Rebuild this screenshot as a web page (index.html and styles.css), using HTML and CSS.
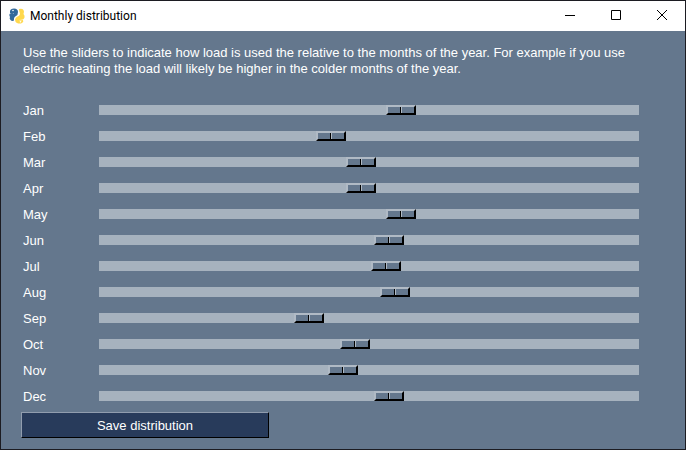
FILE: index.html
```html
<!DOCTYPE html>
<html lang="en">
<head>
<meta charset="utf-8">
<title>Monthly distribution</title>
<link rel="stylesheet" href="styles.css">
</head>
<body>
<div class="window">
  <header class="titlebar">
    <svg class="logo" viewBox="0 0 16 16" aria-hidden="true">
      <path fill="#32699b" d="M1 3Q1.500 .5 5 .5Q9 .5 9 4Q9 7 7 8Q4.500 9 5 12.500Q3 13.500 1.500 12Q0 10.500 1 9Q0 7.500 .5 6Q1.500 5 5 5.500V5Q2.500 5.500 1 5Z"/>
      <path fill="#ffd84d" d="M10 1Q13 0 14.500 2Q15.500 3.500 14.500 6Q16 7.500 15.500 9.500Q15 12 10.500 12V12.500L14 12Q15 14 13 15Q10.500 16 8 15Q6 14 6 11.500Q6.500 9.500 8.500 8.500Q12 7 10.500 4Q10 3 10 1Z"/>
      <circle cx="4" cy="2.500" r=".8" fill="#fff"/>
      <circle cx="11.500" cy="13.800" r=".8" fill="#fff"/>
    </svg>
    <h1 class="title">Monthly distribution</h1>
    <button class="control" type="button" aria-label="Minimize"><svg viewBox="0 0 10 10"><path d="M0 5.500H10"/></svg></button>
    <button class="control" type="button" aria-label="Maximize"><svg viewBox="0 0 10 10"><path d="M.5 .5H9.500V9.500H.5Z"/></svg></button>
    <button class="control" type="button" aria-label="Close"><svg viewBox="0 0 10 10"><path d="M0 0L10 10M10 0L0 10"/></svg></button>
  </header>
  <main class="content">
    <p class="intro">Use the sliders to indicate how load is used the relative to the months of the year. For example if you use electric heating the load will likely be higher in the colder months of the year.</p>
    <form>
      <div class="row"><label for="jan">Jan</label><input id="jan" type="range" min="0" max="510" value="287"></div>
      <div class="row"><label for="feb">Feb</label><input id="feb" type="range" min="0" max="510" value="217"></div>
      <div class="row"><label for="mar">Mar</label><input id="mar" type="range" min="0" max="510" value="247"></div>
      <div class="row"><label for="apr">Apr</label><input id="apr" type="range" min="0" max="510" value="247"></div>
      <div class="row"><label for="may">May</label><input id="may" type="range" min="0" max="510" value="287"></div>
      <div class="row"><label for="jun">Jun</label><input id="jun" type="range" min="0" max="510" value="275"></div>
      <div class="row"><label for="jul">Jul</label><input id="jul" type="range" min="0" max="510" value="272"></div>
      <div class="row"><label for="aug">Aug</label><input id="aug" type="range" min="0" max="510" value="281"></div>
      <div class="row"><label for="sep">Sep</label><input id="sep" type="range" min="0" max="510" value="195"></div>
      <div class="row"><label for="oct">Oct</label><input id="oct" type="range" min="0" max="510" value="241"></div>
      <div class="row"><label for="nov">Nov</label><input id="nov" type="range" min="0" max="510" value="229"></div>
      <div class="row"><label for="dec">Dec</label><input id="dec" type="range" min="0" max="510" value="275"></div>
      <button class="save" type="button">Save distribution</button>
    </form>
  </main>
</div>
</body>
</html>
```
FILE: styles.css
```css
* {
  box-sizing: border-box;
}

body {
  margin: 0;
  background: #64778d;
  color: #fff;
  font: 13px/16px "Liberation Sans", Arial, sans-serif;
}

.window {
  min-height: 100vh;
  border: 1px solid #1c1c22;
}

.titlebar {
  display: flex;
  align-items: center;
  height: 30px;
  padding-left: 8px;
  background: #fff;
  color: #000;
}

.logo {
  width: 16px;
  height: 16px;
}

.title {
  flex: 1;
  margin: 0 0 0 5px;
  font: 12px/16px Roboto, "Open Sans", sans-serif;
}

.control {
  display: flex;
  align-items: center;
  justify-content: center;
  width: 46px;
  height: 30px;
  padding: 0 0 2px;
  border: 0;
  background: none;
}

.control svg {
  width: 10px;
  height: 10px;
  fill: none;
  stroke: #000;
  stroke-width: 1;
}

.content {
  padding: 14px 46px 11px 20px;
}

.intro {
  margin: 0 0 20px;
  padding-left: 2px;
}

.row {
  display: flex;
  align-items: center;
  height: 26px;
}

.row label {
  width: 78px;
  padding: 2px 0 0 2px;
}

.row input {
  flex: 1;
  min-width: 0;
  height: 10px;
  margin: 0;
  appearance: none;
  background: #a6b2be;
}

.row input::-webkit-slider-thumb {
  appearance: none;
  box-sizing: border-box;
  width: 30px;
  height: 10px;
  border: 2px solid;
  border-color: #b0bac5 #000 #000 #b0bac5;
  background: linear-gradient(90deg, #64778d 12px, #000 12px 13px, #b0bac5 13px 14px, #64778d 14px) padding-box;
}

.save {
  display: block;
  width: 248px;
  height: 26px;
  margin-top: 3px;
  padding: 2px 0 0;
  border: 1px solid;
  border-color: #919dae #000 #000 #919dae;
  background: #283b5b;
  color: #fff;
  font: inherit;
}
```
